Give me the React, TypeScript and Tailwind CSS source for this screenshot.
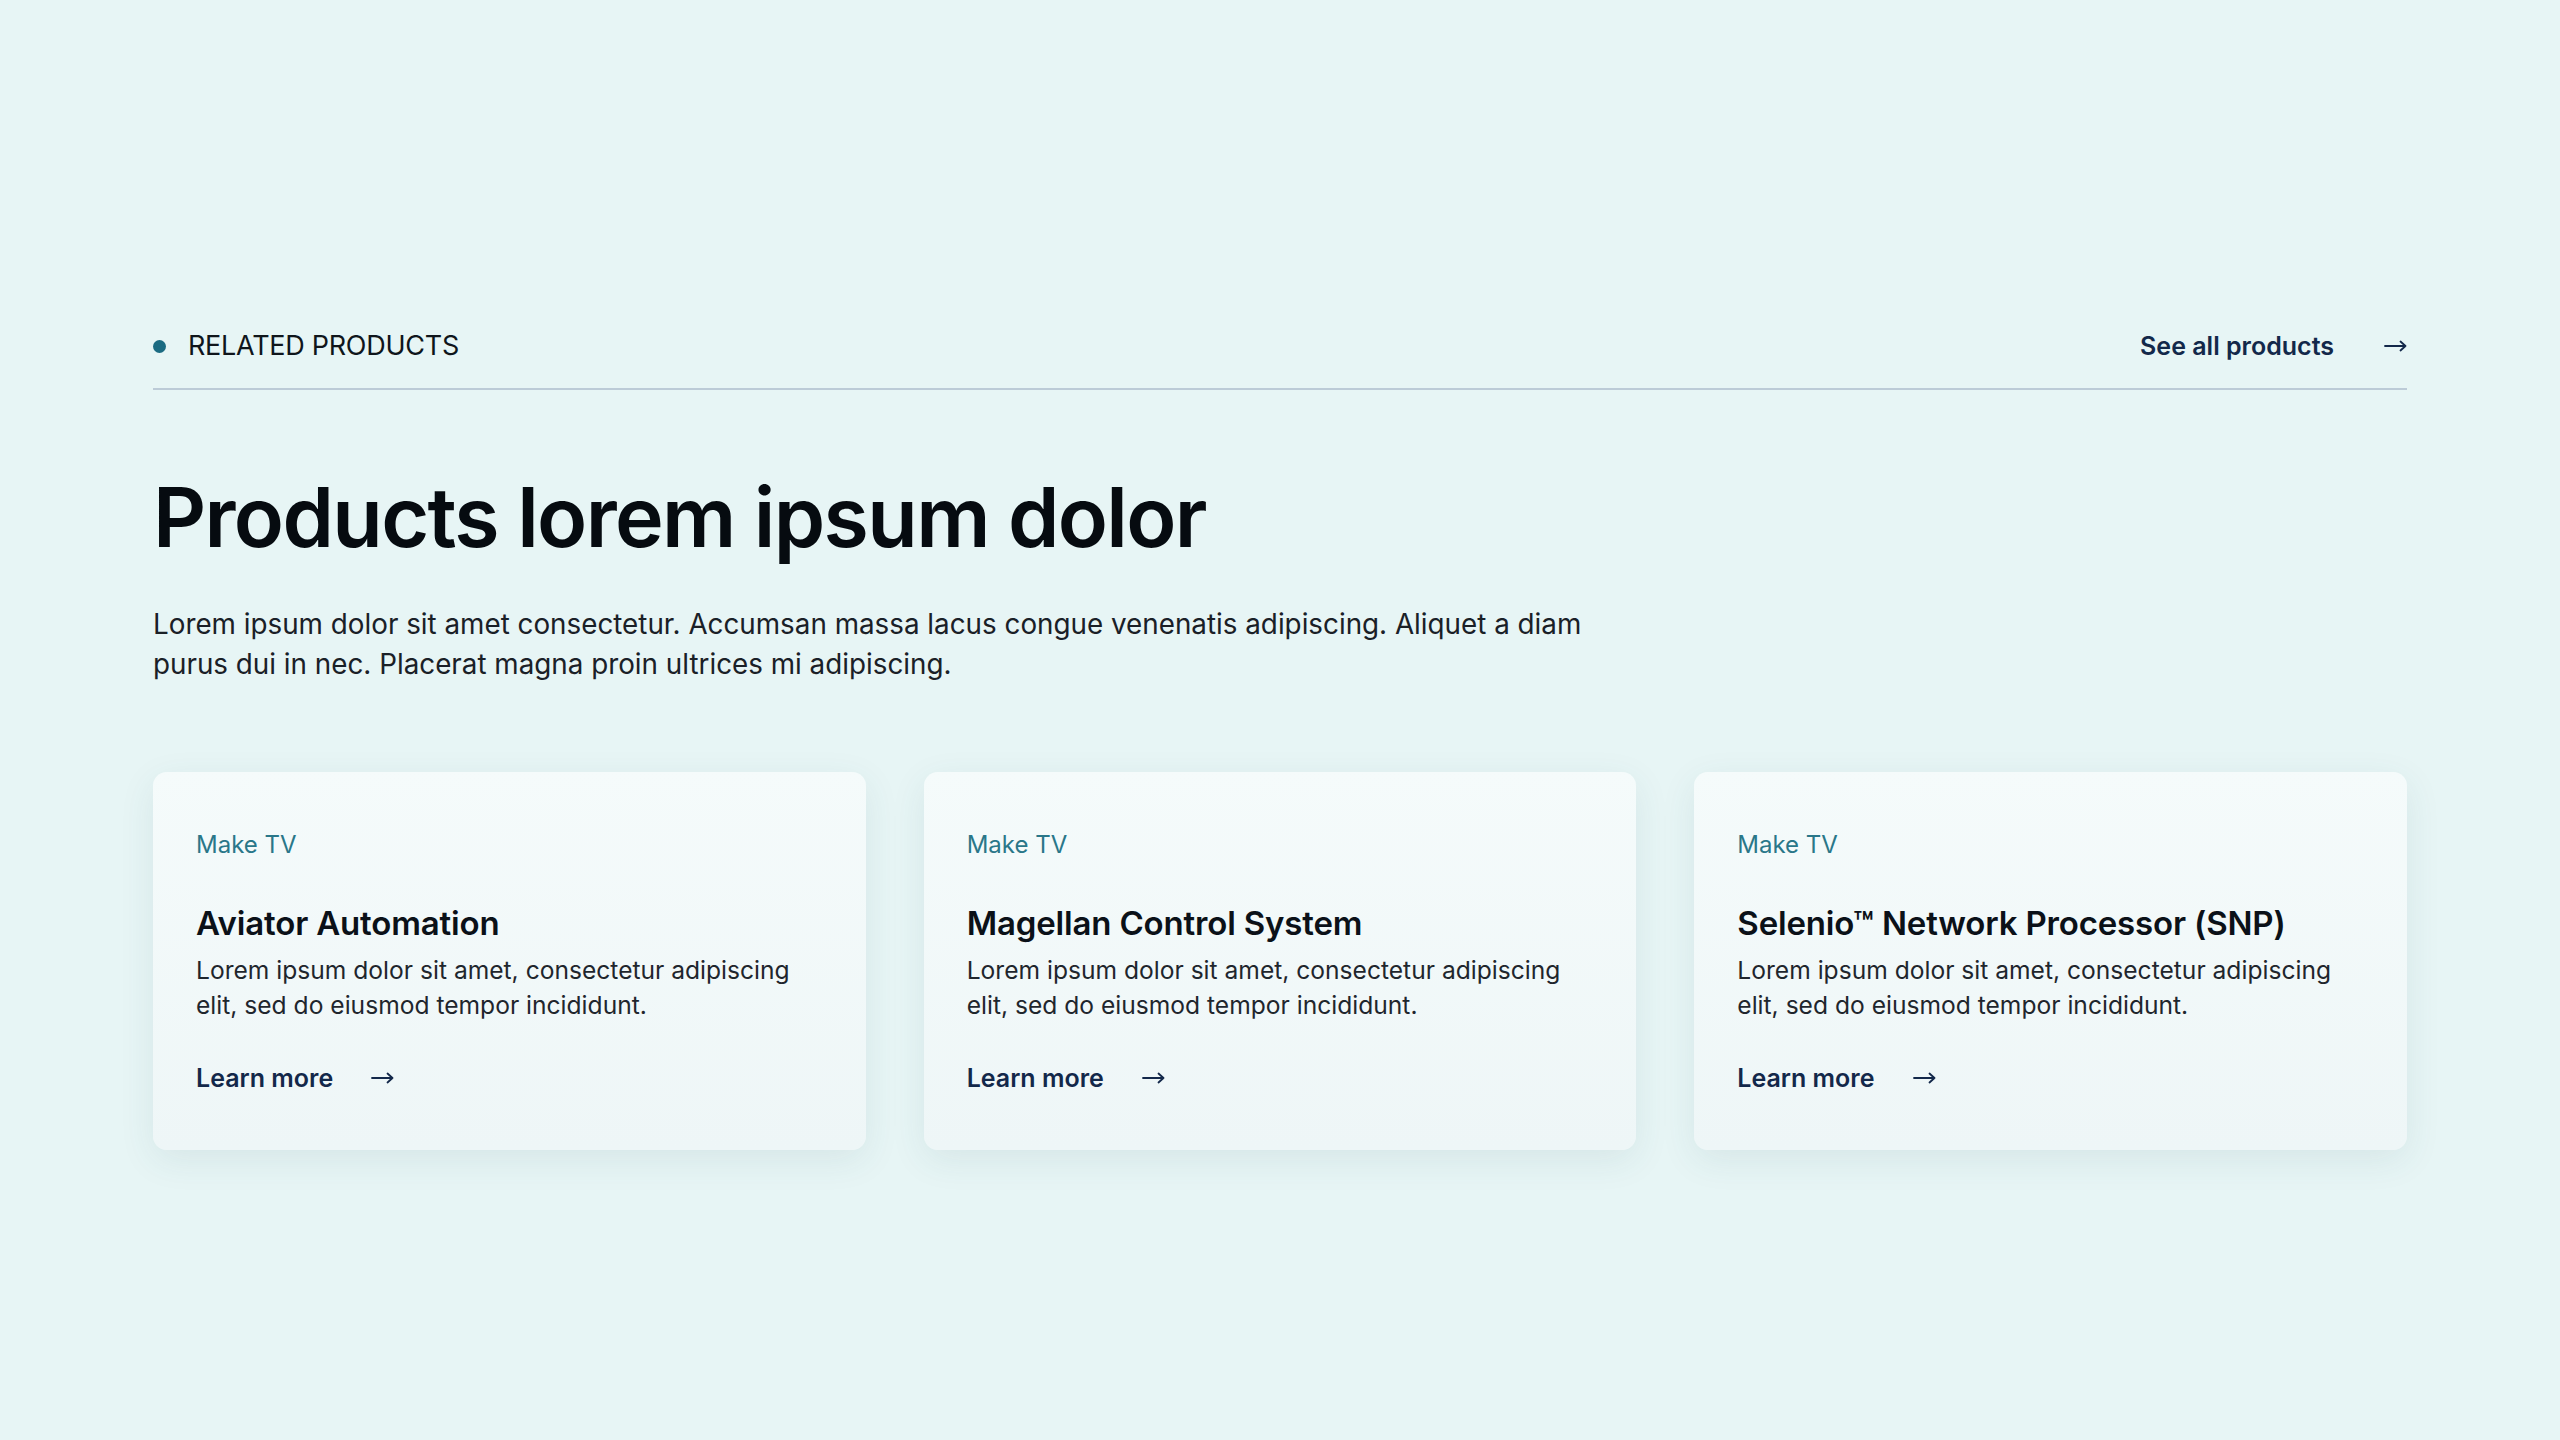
import React from "react";

const products = [
  { brand: "Make TV", name: "Aviator Automation" },
  { brand: "Make TV", name: "Magellan Control System" },
  { brand: "Make TV", name: "Selenio™ Network Processor (SNP)" },
];

function Arrow() {
  return (
    <svg width="23" height="12" viewBox="0 0 23 12" fill="none" className="shrink-0">
      <path d="M1 6h20.5M16.5 1.5 21.5 6l-5 4.5" stroke="#13284a" strokeWidth="1.8" strokeLinecap="round" strokeLinejoin="round" />
    </svg>
  );
}

function ProductCard({ brand, name }: { brand: string; name: string }) {
  return (
    <div className="flex flex-col rounded-[14px] bg-gradient-to-b from-[#f5fbfb] to-[#eef6f7] px-[43px] pt-[57px] pb-[56px] shadow-[0_10px_36px_rgba(40,90,100,0.09)]">
      <p className="text-[24px] leading-[32px] text-[#2a7789]">{brand}</p>
      <h3 className="mt-[42px] text-[33px] font-semibold leading-[40px] tracking-[-0.005em] text-[#0b1118]">{name}</h3>
      <p className="mt-[10px] text-[24.6px] leading-[35px] text-[#1f262d]">
        Lorem ipsum dolor sit amet, consectetur adipiscing elit, sed do eiusmod tempor incididunt.
      </p>
      <a href="#" className="mt-[39px] flex items-center gap-[38px] text-[25px] font-semibold leading-[32px] text-[#13284a]">
        Learn more
        <Arrow />
      </a>
    </div>
  );
}

export default function App() {
  return (
    <div className="min-h-screen bg-[#e7f5f5] px-[153px] pt-[328px] pb-[289px] font-['Inter','Liberation_Sans',sans-serif]">
      <div className="flex items-center justify-between border-b-2 border-[#bccbd7] pb-[24px]">
        <div className="flex items-center gap-[22px]">
          <span className="h-[13px] w-[13px] rounded-full bg-[#1b6b82]" />
          <span className="text-[27px] leading-[36px] tracking-[-0.01em] text-[#0f151b]">RELATED PRODUCTS</span>
        </div>
        <a href="#" className="flex items-center gap-[50px] text-[25px] font-semibold leading-[36px] text-[#13284a]">
          See all products
          <Arrow />
        </a>
      </div>

      <h2 className="mt-[81px] text-[82.5px] font-semibold leading-[92px] tracking-[-0.02em] text-[#060b10]">
        Products lorem ipsum dolor
      </h2>
      <p className="mt-[41px] max-w-[1445px] text-[27.8px] leading-[40px] text-[#1a2027]">
        Lorem ipsum dolor sit amet consectetur. Accumsan massa lacus congue venenatis adipiscing. Aliquet a diam purus dui in nec. Placerat magna proin ultrices mi adipiscing.
      </p>

      <div className="mt-[88px] grid grid-cols-3 gap-[58px]">
        {products.map((p) => (
          <ProductCard key={p.name} brand={p.brand} name={p.name} />
        ))}
      </div>
    </div>
  );
}
